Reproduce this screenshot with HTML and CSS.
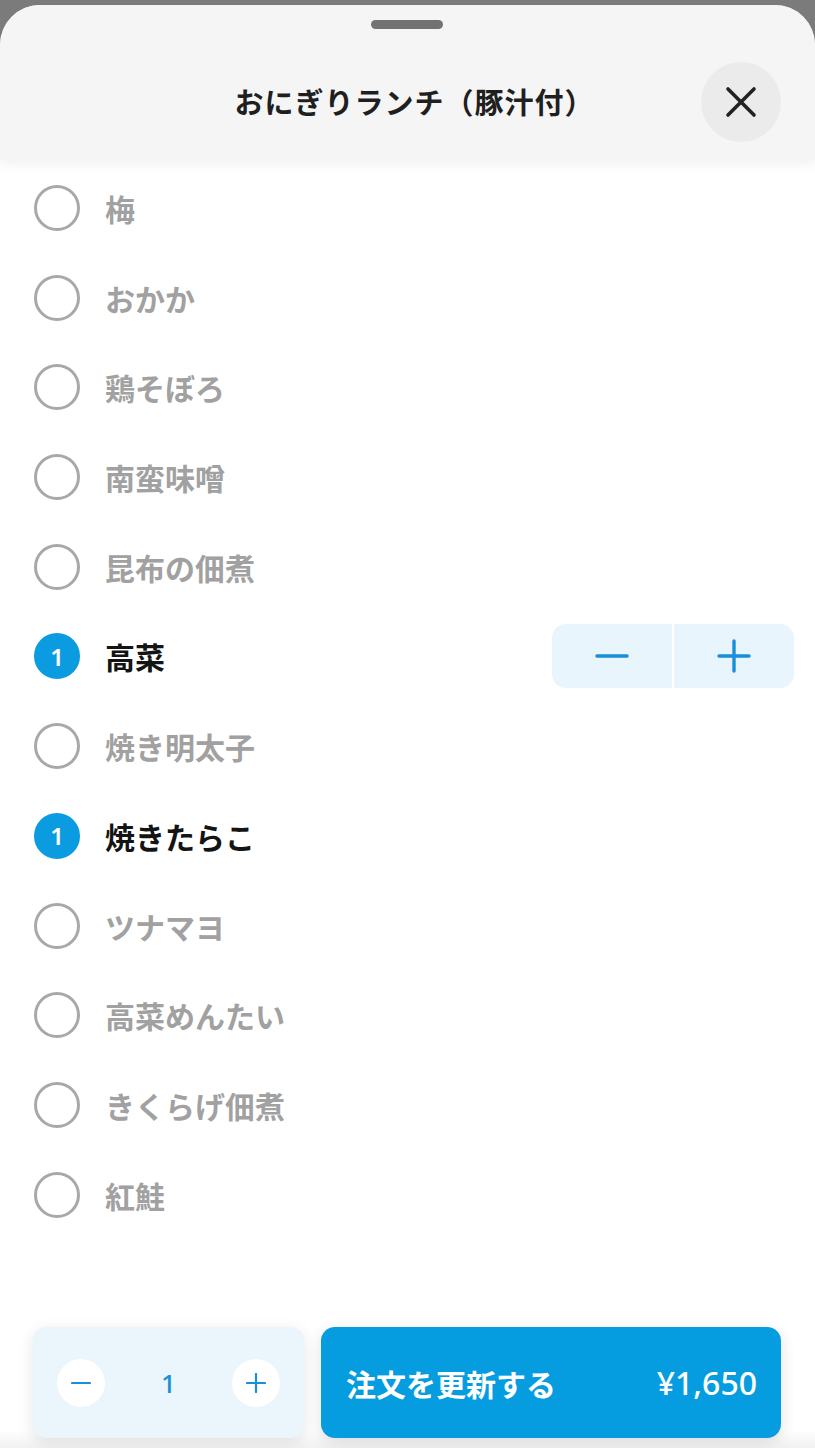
FILE: index.html
```html
<!DOCTYPE html>
<html lang="ja">
<head>
<meta charset="utf-8">
<link rel="stylesheet" href="styles.css">
</head>
<body>
<div class="sheet">
  <header class="header">
    <div class="handle"></div>
    <h1 class="title">おにぎりランチ（豚汁付）</h1>
    <button class="close" aria-label="閉じる">
      <svg viewBox="0 0 32 32" width="32" height="32"><path d="M3 3 L29 29 M29 3 L3 29" stroke="#222" stroke-width="3.6" stroke-linecap="round" fill="none"/></svg>
    </button>
  </header>
  <ul class="list">
    <li class="row"><span class="radio"></span><span class="label">梅</span></li>
    <li class="row"><span class="radio"></span><span class="label">おかか</span></li>
    <li class="row"><span class="radio"></span><span class="label">鶏そぼろ</span></li>
    <li class="row"><span class="radio"></span><span class="label">南蛮味噌</span></li>
    <li class="row"><span class="radio"></span><span class="label">昆布の佃煮</span></li>
    <li class="row selected"><span class="radio">1</span><span class="label">高菜</span>
      <div class="stepper">
        <button class="step"><svg viewBox="0 0 34 34" width="34" height="34"><path d="M2 17 H32" stroke="#1b8fd6" stroke-width="3.4" stroke-linecap="round"/></svg></button>
        <button class="step"><svg viewBox="0 0 34 34" width="34" height="34"><path d="M2 17 H32 M17 2 V32" stroke="#1b8fd6" stroke-width="3.4" stroke-linecap="round"/></svg></button>
      </div>
    </li>
    <li class="row"><span class="radio"></span><span class="label">焼き明太子</span></li>
    <li class="row selected"><span class="radio">1</span><span class="label">焼きたらこ</span></li>
    <li class="row"><span class="radio"></span><span class="label">ツナマヨ</span></li>
    <li class="row"><span class="radio"></span><span class="label">高菜めんたい</span></li>
    <li class="row"><span class="radio"></span><span class="label">きくらげ佃煮</span></li>
    <li class="row"><span class="radio"></span><span class="label">紅鮭</span></li>
  </ul>
  <footer class="footer">
    <div class="qty">
      <button class="qbtn"><svg viewBox="0 0 20 20" width="20" height="20"><path d="M1 10 H19" stroke="#1b8fd6" stroke-width="2.2" stroke-linecap="round"/></svg></button>
      <span class="qnum">1</span>
      <button class="qbtn"><svg viewBox="0 0 20 20" width="20" height="20"><path d="M1 10 H19 M10 1 V19" stroke="#1b8fd6" stroke-width="2.2" stroke-linecap="round"/></svg></button>
    </div>
    <button class="submit"><span class="submit-label">注文を更新する</span><span class="price">¥1,650</span></button>
  </footer>
</div>
</body>
</html>
```
FILE: styles.css
```css
* { box-sizing: border-box; }
html, body {
  margin: 0;
  padding: 0;
}
body {
  background: #7b7b7b;
  font-family: "Noto Sans CJK JP", "Noto Sans", sans-serif;
  height: 1448px;
  overflow: hidden;
  padding-top: 5px;
}
.sheet {
  height: 1443px;
  background: #fff;
  border-radius: 40px 40px 0 0;
  overflow: hidden;
  display: flex;
  flex-direction: column;
}
.header {
  position: relative;
  height: 155px;
  flex: none;
  background: #f5f5f5;
  display: flex;
  align-items: flex-start;
  justify-content: center;
  padding-top: 76px;
  padding-left: 14px;
  box-shadow: 0 4px 12px rgba(0,0,0,0.06);
  z-index: 1;
}
.handle {
  position: absolute;
  top: 15px;
  left: 371px;
  width: 72px;
  height: 9px;
  border-radius: 5px;
  background: #727272;
}
.title {
  margin: 0;
  font-size: 29px;
  line-height: 40px;
  font-weight: 600;
  color: #1f1f1f;
  letter-spacing: 1px;
}
.close {
  position: absolute;
  left: 701px;
  top: 57px;
  width: 80px;
  height: 80px;
  border-radius: 50%;
  border: 0;
  background: #ebebeb;
  display: flex;
  align-items: center;
  justify-content: center;
  padding: 0;
}
.list {
  list-style: none;
  margin: 0;
  padding: 3px 0 0 0;
  flex: 1;
}
.row {
  height: 89.73px;
  display: flex;
  align-items: center;
  padding-left: 34px;
  padding-right: 21px;
}
.radio {
  width: 46px;
  height: 46px;
  border-radius: 50%;
  border: 3px solid #a8a8a8;
  flex: none;
  display: flex;
  align-items: center;
  justify-content: center;
  color: #fff;
  font-family: "Noto Sans", sans-serif;
  font-size: 24px;
  font-weight: 600;
}
.label {
  margin-left: 25px;
  font-size: 30px;
  line-height: 40px;
  font-weight: 600;
  color: #a1a1a1;
}
.selected .radio {
  background: #0a9be0;
  border-color: #0a9be0;
}
.selected .label {
  color: #141414;
}
.stepper {
  margin-left: auto;
  display: flex;
  gap: 2px;
  height: 64px;
  border-radius: 14px;
  overflow: hidden;
}
.step {
  width: 120px;
  border: 0;
  background: #e9f5fd;
  display: flex;
  align-items: center;
  justify-content: center;
  padding: 0;
}
.footer {
  flex: none;
  height: 148px;
  display: flex;
  gap: 17px;
  padding: 27px 34px 10px 33px;
  background: linear-gradient(to bottom, #ffffff 0%, #ffffff 88%, #f1f1f1 100%);
}
.qty {
  width: 271px;
  height: 111px;
  background: #eaf5fc;
  border-radius: 13px;
  display: flex;
  align-items: center;
  justify-content: space-between;
  padding: 0 24px;
  box-shadow: 0 4px 16px rgba(0,0,0,0.10);
}
.qbtn {
  width: 48px;
  height: 48px;
  border-radius: 50%;
  border: 0;
  background: #fff;
  display: flex;
  align-items: center;
  justify-content: center;
  padding: 0;
}
.qnum {
  font-family: "Noto Sans", sans-serif;
  font-size: 26px;
  color: #1b8fd6;
  font-weight: 500;
}
.submit {
  flex: 1;
  height: 111px;
  border: 0;
  border-radius: 14px;
  background: #069de0;
  color: #fff;
  display: flex;
  align-items: center;
  justify-content: space-between;
  padding: 0 24px 0 25px;
  font-family: "Noto Sans CJK JP", "Noto Sans", sans-serif;
  font-size: 30px;
  font-weight: 600;
  box-shadow: 0 4px 16px rgba(0,0,0,0.12);
}
.price {
  font-family: "Noto Sans", sans-serif;
  font-weight: 500;
  font-size: 32px;
}
```
